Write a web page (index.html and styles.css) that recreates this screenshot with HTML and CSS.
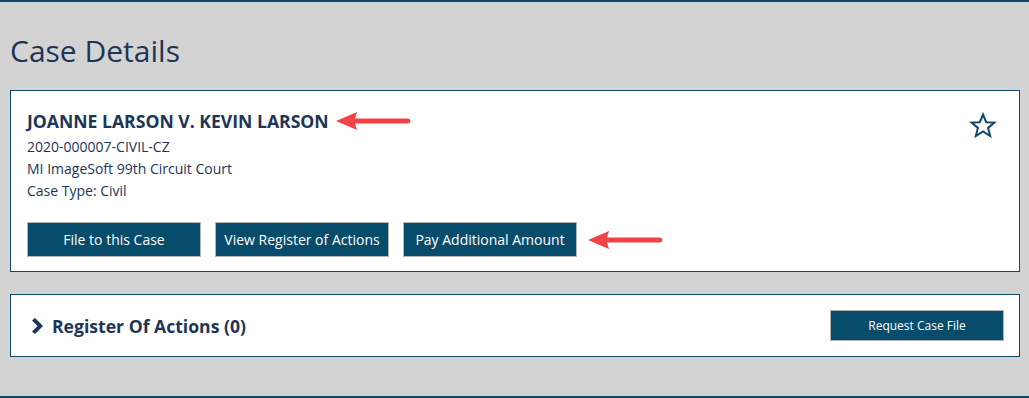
FILE: index.html
```html
<!DOCTYPE html>
<html lang="en">
<head>
    <meta charset="UTF-8">
    <title>Case Details</title>
    <link rel="stylesheet" href="styles.css">
</head>
<body>
    <div class="page">
        <h1>Case Details</h1>

        <!-- Case summary card -->
        <div class="card case-card">
            <div class="case-info">
                <h2 class="case-title">JOANNE LARSON V. KEVIN LARSON
                    <svg class="pointer" width="76" height="18" viewBox="0 0 76 18"><path d="M0 9 L21 0 L19 6.5 L72 6.5 A2.5 2.5 0 0 1 72 11.5 L19 11.5 L21 18 Z" fill="#f04346"/></svg>
                </h2>
                <p>2020-000007-CIVIL-CZ</p>
                <p>MI ImageSoft 99th Circuit Court</p>
                <p>Case Type: Civil</p>
                <div class="actions">
                    <button class="btn">File to this Case</button>
                    <button class="btn">View Register of Actions</button>
                    <button class="btn">Pay Additional Amount</button>
                    <svg class="pointer" width="76" height="18" viewBox="0 0 76 18"><path d="M0 9 L21 0 L19 6.5 L72 6.5 A2.5 2.5 0 0 1 72 11.5 L19 11.5 L21 18 Z" fill="#f04346"/></svg>
                </div>
            </div>
            <svg class="star" width="28" height="28" viewBox="0 0 28 28"><path d="M14 2.5 L17.2 10.2 L25.5 10.6 L19.1 15.9 L21.2 24 L14 19.5 L6.8 24 L8.9 15.9 L2.5 10.6 L10.8 10.2 Z" fill="none" stroke="#0d4a6a" stroke-width="2" stroke-linejoin="miter"/></svg>
        </div>

        <!-- Register of actions -->
        <div class="card roa-card">
            <div class="roa-title">
                <svg width="14" height="16" viewBox="0 0 14 16"><path d="M1 2.5 L4 0 L12 8 L4 16 L1 13.5 L6.5 8 Z" fill="#1d3557"/></svg>
                <span>Register Of Actions (0)</span>
            </div>
            <button class="btn btn-small">Request Case File</button>
        </div>
    </div>
</body>
</html>
```

FILE: styles.css
```css
* {
    box-sizing: border-box;
}

body {
    font-family: "Open Sans", Arial, sans-serif;
    background-color: #d3d3d3;
    margin: 0;
    padding: 0;
    color: #1d3557;
}

.page {
    border-top: 2px solid #0d4a6a;
    border-bottom: 2px solid #0d4a6a;
    height: 398px;
    padding: 0 9px 0 10px;
}

h1 {
    font-size: 30px;
    font-weight: 400;
    margin: 29px 0 0 0;
    line-height: 40px;
    color: #1d3557;
}

.card {
    background-color: #fff;
    border: 1px solid #0d4a6a;
}

.case-card {
    margin-top: 19px;
    height: 182px;
    padding: 18px 22px 0 16px;
    display: flex;
    justify-content: space-between;
}

.case-title {
    font-size: 17.6px;
    font-weight: 700;
    margin: 0 0 3px;
    line-height: 24px;
    display: flex;
    align-items: center;
}

.case-title .pointer {
    margin-left: 7px;
}

.case-info p {
    font-size: 14px;
    margin: 0;
    line-height: 22px;
}

.actions {
    margin-top: 20px;
    display: flex;
    align-items: center;
    gap: 14px;
}

.actions .pointer {
    margin-left: -3px;
}

.btn {
    font-family: "Open Sans", Arial, sans-serif;
    font-size: 14px;
    background-color: #084c6b;
    color: #fff;
    border: 1px solid #b5b5b5;
    width: 174px;
    height: 35px;
    padding: 0;
    cursor: pointer;
}

.star {
    margin-top: 3px;
}

.roa-card {
    margin-top: 22px;
    height: 63px;
    padding: 0 15px 0 20px;
    display: flex;
    align-items: center;
    justify-content: space-between;
}

.roa-title {
    display: flex;
    align-items: center;
    gap: 7px;
    font-size: 17.6px;
    font-weight: 700;
}

.btn-small {
    font-size: 12px;
    height: 31px;
}
```
